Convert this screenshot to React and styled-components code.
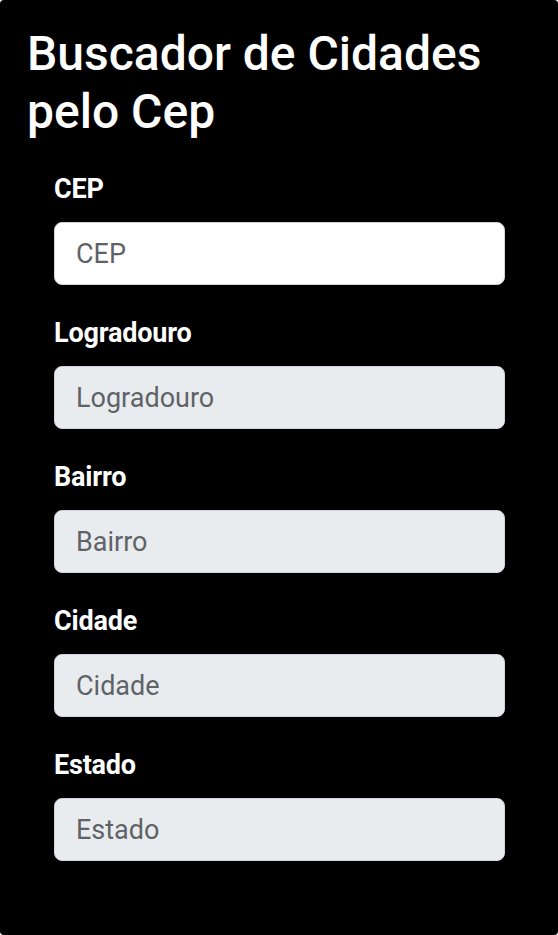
import React from "react";
import styled, { createGlobalStyle } from "styled-components";

const Global = createGlobalStyle`
  html, body { margin: 0; padding: 0; background: #ffffff; }
  body { font-family: Roboto, "Noto Sans", "Liberation Sans", sans-serif; }
  * { box-sizing: border-box; }
`;

const Page = styled.main`
  background: #000000;
  min-height: 935px;
  border-radius: 4px;
  padding: 25px 53px 40px 27px;
  color: #ffffff;
`;

const Title = styled.h1`
  margin: 0 0 31px 0;
  font-size: 48px;
  font-weight: 500;
  line-height: 1.2;
  color: #ffffff;
`;

const Form = styled.form`
  display: flex;
  flex-direction: column;
  gap: 30px;
  padding-left: 27px;
`;

const Field = styled.div`
  display: flex;
  flex-direction: column;
  gap: 15px;
`;

const Label = styled.label`
  font-size: 27px;
  font-weight: 700;
  line-height: 36px;
  letter-spacing: -0.2px;
  color: #ffffff;
`;

const Input = styled.input`
  width: 100%;
  height: 63px;
  padding: 0 21px;
  font-family: inherit;
  font-size: 27px;
  color: #212529;
  background: ${(p) => (p.disabled ? "#e9ecef" : "#ffffff")};
  border: 1px solid #ced4da;
  border-radius: 8px;
  outline: none;
  &::placeholder { color: #5f6368; opacity: 1; }
`;

const fields = [
  { id: "cep", label: "CEP", disabled: false },
  { id: "logradouro", label: "Logradouro", disabled: true },
  { id: "bairro", label: "Bairro", disabled: true },
  { id: "cidade", label: "Cidade", disabled: true },
  { id: "estado", label: "Estado", disabled: true },
];

export default function App() {
  return (
    <>
      <Global />
      <Page>
        <Title>Buscador de Cidades pelo Cep</Title>
        <Form onSubmit={(e) => e.preventDefault()}>
          {fields.map((f) => (
            <Field key={f.id}>
              <Label htmlFor={f.id}>{f.label}</Label>
              <Input id={f.id} placeholder={f.label} disabled={f.disabled} />
            </Field>
          ))}
        </Form>
      </Page>
    </>
  );
}
